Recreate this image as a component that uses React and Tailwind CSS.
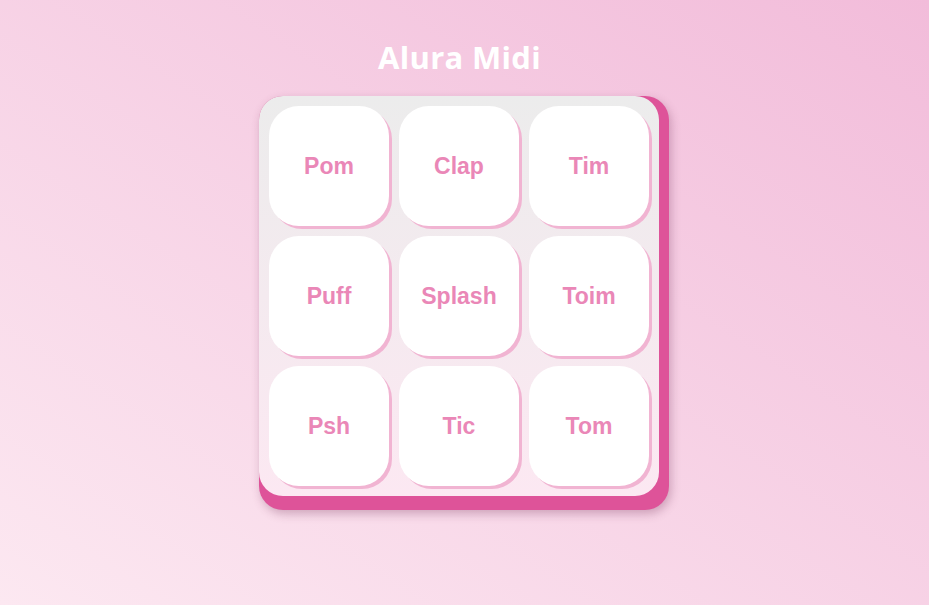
const keys = ['Pom', 'Clap', 'Tim', 'Puff', 'Splash', 'Toim', 'Psh', 'Tic', 'Tom'];

export default function App() {
  return (
    <div className="w-full h-[605px] flex flex-col items-center bg-[linear-gradient(to_top_right,#fce8f1,#f2bcda)] font-['Liberation_Sans',Arial,sans-serif]">
      <div className="w-[410px] pr-[10px] flex justify-center">
        <h1 className="mt-[37px] text-[31px] leading-[40px] font-bold text-white font-['Open_Sans',sans-serif] tracking-[0.3px]">Alura Midi</h1>
      </div>
      <section className="mt-[19px] mr-[1px] rounded-[24px] pr-[10px] pb-[14px] bg-[#de5399] shadow-[2px_4px_10px_rgba(110,40,80,0.3)]">
        <div className="w-[400px] h-[400px] rounded-[24px] p-[10px] grid grid-cols-3 gap-[10px] bg-[linear-gradient(to_bottom,#ececec,#fce8f2)]">
          {keys.map((k) => (
            <button
              key={k}
              className="w-[120px] h-[120px] rounded-[30px] bg-white shadow-[3px_3px_0_#f1b4d2] text-[23px] font-bold text-[#ea87b7] font-['Liberation_Sans',Arial,sans-serif]"
            >
              {k}
            </button>
          ))}
        </div>
      </section>
    </div>
  );
}
